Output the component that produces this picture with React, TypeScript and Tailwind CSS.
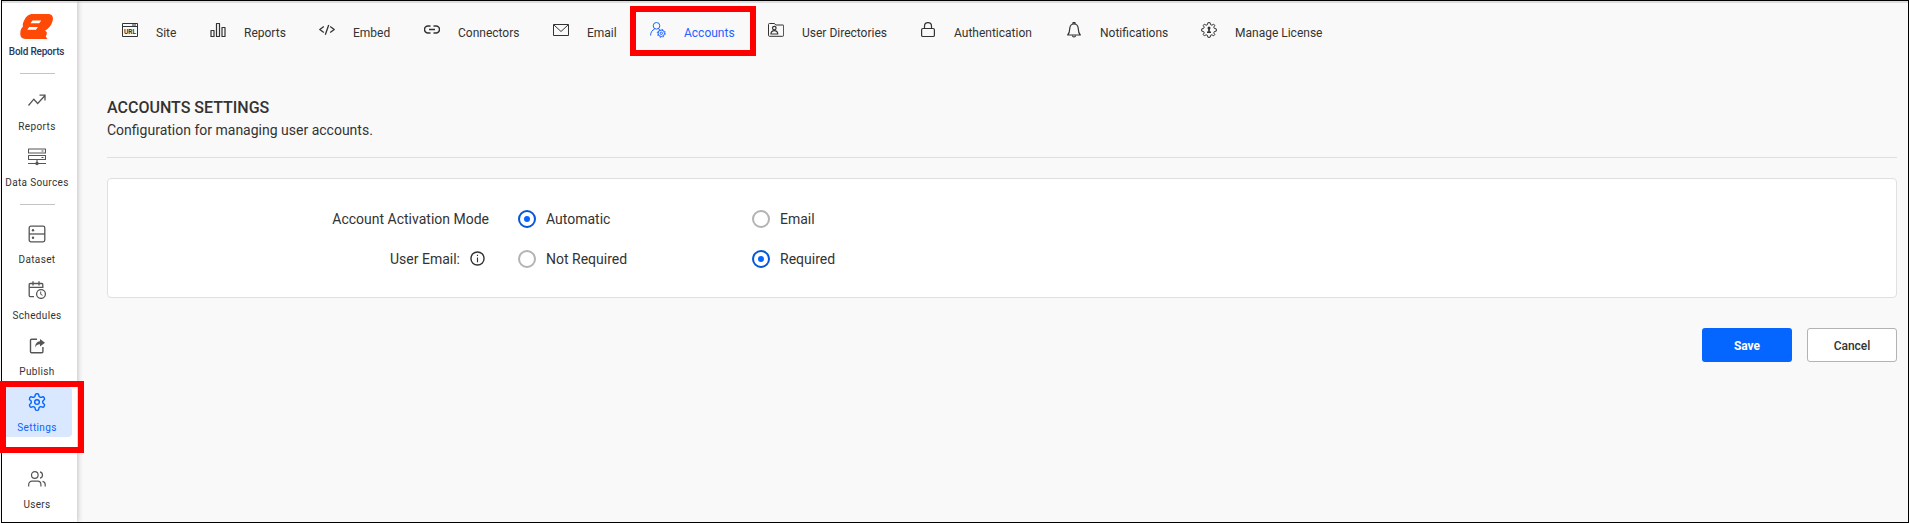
import type { ReactNode } from "react";

const svg = (children: ReactNode, cls = "h-4 w-4", vb = "0 0 16 16") => (
  <svg viewBox={vb} className={cls + " shrink-0"} fill="none" stroke="currentColor" strokeWidth="1" strokeLinejoin="round">
    {children}
  </svg>
);

const gear =
  "M6.900.7H9.100L9.600 2.700 10.900 3.200 12.700 2.200 13.800 3.300 12.800 5.100 13.300 6.400 15.300 6.900V9.100L13.300 9.600 12.800 10.900 13.800 12.700 12.700 13.800 10.900 12.800 9.600 13.300 9.100 15.300H6.900L6.400 13.300 5.100 12.800 3.300 13.800 2.200 12.700 3.200 10.900 2.700 9.600.7 9.100V6.900L2.700 6.400 3.200 5.100 2.200 3.300 3.300 2.200 5.100 3.200 6.400 2.700z";

const tabs = [
  {
    label: "Site",
    width: "w-[54px]",
    icon: svg(
      <>
        <path d="M.5 1.500h15v13H.5zM.5 4.500h15" strokeLinejoin="miter" stroke="#333" />
        <path d="M10 3h4" />
        <text x="8" y="11.900" fontSize="6.500" textAnchor="middle" fill="#333" stroke="none" fontWeight="700" fontFamily="Roboto, sans-serif">URL</text>
      </>
    ),
  },
  {
    label: "Reports",
    width: "w-[75px]",
    icon: svg(<path d="M1 8.500h3v6H1zM6.500 1.500h3v13h-3zM12 5.500h3v9h-3z" strokeWidth="1.200" />),
  },
  {
    label: "Embed",
    width: "w-[71px]",
    icon: svg(<path d="M4.800 4.500.8 7.500l4 3M11.200 4.500l4 3-4 3M9.700 3l-3.400 9.800" strokeWidth="1.300" />),
  },
  {
    label: "Connectors",
    width: "w-[95px]",
    icon: svg(<path d="M6.500 4H4a3.500 3.500 0 0 0 0 7h2.500M9.500 4H12a3.500 3.500 0 0 1 0 7H9.500M5 7.500h6" strokeWidth="1.500" />),
  },
  {
    label: "Email",
    width: "w-[63px]",
    icon: svg(<path d="M.5 2.500h15v11H.5zM.8 2.800 8 9.500l7.200-6.700" />),
  },
  {
    label: "Accounts",
    width: "w-[84px]",
    active: true,
    icon: svg(
      <>
        <circle cx="6.500" cy="3.800" r="3.300" />
        <path d="M.6 13.500c0-3.200 1.600-5.600 4-6.300M8.500 7l1.200.7" />
        <circle cx="11.300" cy="11.300" r="3.200" />
        <circle cx="11.300" cy="11.300" r="4" strokeDasharray="1.500 1.640" />
        <circle cx="11.300" cy="11.300" r="1.200" />
      </>
    ),
  },
  {
    label: "User Directories",
    width: "w-[118px]",
    icon: svg(
      <>
        <path d="M1.500 1.500h5l1.200 1.500H15a.7.7 0 0 1 .7.7v9.600a1 1 0 0 1-1 1H1.500a1 1 0 0 1-1-1V2.500a1 1 0 0 1 1-1z" />
        <circle cx="6.300" cy="6.100" r="1.800" strokeWidth="1.200" />
        <path d="M2.900 12c.2-2.200 1.500-3.300 3.400-3.300S9.600 9.800 9.800 12z" strokeWidth="1.200" />
      </>
    ),
  },
  {
    label: "Authentication",
    width: "w-[112px]",
    icon: svg(
      <>
        <rect x="1.600" y="6.500" width="12.800" height="8" rx="1.300" strokeWidth="1.200" />
        <path d="M4.500 6.500V4.200a3.500 3.500 0 0 1 7 0v2.300" strokeWidth="1.200" />
      </>
    ),
  },
  {
    label: "Notifications",
    width: "w-[101px]",
    icon: svg(
      <>
        <path d="M1.700 13h12.600c-1.500-1.600-1.900-2.800-2-6C12.200 4 10.500 2 8 2S3.800 4 3.700 7c-.1 3.200-.5 4.400-2 6z" strokeWidth="1.200" />
        <path d="M6.500 13.500a1.500 1.500 0 0 0 3 0M7 2V.7h2V2" strokeWidth="1.200" />
      </>
    ),
  },
  {
    label: "Manage License",
    width: "w-[122px]",
    icon: svg(
      <>
        <path d={gear} strokeWidth="1" />
        <circle cx="8" cy="5.900" r="1.500" fill="currentColor" stroke="none" />
        <path d="M7.200 6h1.600v3.500H10V11H6V9.500h1.200z" fill="currentColor" stroke="none" />
      </>
    ),
  },
];

const sideSvg = (children: ReactNode) => svg(children, "h-[18px] w-[18px]", "0 0 18 18");

const icons = {
  reports: sideSvg(<path d="M.5 13.500 5.800 7.200l3.900 4.300L17 3.500M11.500 3.200H17v5.300" strokeWidth="1.300" strokeLinejoin="miter" />),
  sources: sideSvg(
    <>
      <path d="M.5 1h17v4H.5zM.5 7.500h17v4H.5zM9 11.500V15M0 15.500h18" strokeWidth="1.100" />
      <path d="M13.500 3h2M13.500 9.500h2" />
      <circle cx="9" cy="15.500" r="1.700" fill="currentColor" stroke="none" />
    </>
  ),
  dataset: sideSvg(
    <>
      <rect x="1.200" y="1.200" width="15.600" height="15.600" rx="1.700" strokeWidth="1.300" />
      <path d="M1 9h16" strokeWidth="1.300" />
      <circle cx="5" cy="5.200" r="1.200" fill="currentColor" stroke="none" />
      <circle cx="5" cy="12.800" r="1.200" fill="currentColor" stroke="none" />
    </>
  ),
  schedules: sideSvg(
    <>
      <path d="M6 15.600H2.200a1 1 0 0 1-1-1V3.500a1 1 0 0 1 1-1h11.600a1 1 0 0 1 1 1V7M1 6.300h14M5 .3V4.500M11 .3V4.500" strokeWidth="1.300" />
      <circle cx="13" cy="13" r="4.400" strokeWidth="1.300" />
      <path d="M12.700 10.500V13.300l1.800 1" />
    </>
  ),
  publish: sideSvg(
    <>
      <path d="M9 2.200H3.500a1 1 0 0 0-1 1v11.600a1 1 0 0 0 1 1h10.400a1 1 0 0 0 1-1V10" strokeWidth="1.400" />
      <path d="M12 2l5 3.800-5 3.800V7.300c-2.500 0-3.800.7-4.800 3.300.1-3.600 1.500-6 4.800-6.300z" fill="currentColor" stroke="none" />
    </>
  ),
  settings: svg(
    <>
      <path
        d="M12.220 2h-.44a2 2 0 0 0-2 2v.18a2 2 0 0 1-1 1.730l-.43.25a2 2 0 0 1-2 0l-.15-.08a2 2 0 0 0-2.730.73l-.22.38a2 2 0 0 0 .73 2.730l.15.1a2 2 0 0 1 1 1.720v.51a2 2 0 0 1-1 1.740l-.15.09a2 2 0 0 0-.73 2.730l.22.38a2 2 0 0 0 2.730.73l.15-.08a2 2 0 0 1 2 0l.43.25a2 2 0 0 1 1 1.730V20a2 2 0 0 0 2 2h.44a2 2 0 0 0 2-2v-.18a2 2 0 0 1 1-1.730l.43-.25a2 2 0 0 1 2 0l.15.08a2 2 0 0 0 2.730-.73l.22-.39a2 2 0 0 0-.73-2.730l-.15-.08a2 2 0 0 1-1-1.740v-.5a2 2 0 0 1 1-1.740l.15-.09a2 2 0 0 0 .73-2.730l-.22-.38a2 2 0 0 0-2.730-.73l-.15.08a2 2 0 0 1-2 0l-.43-.25a2 2 0 0 1-1-1.730V4a2 2 0 0 0-2-2z"
        strokeWidth="1.700"
      />
      <circle cx="12" cy="12" r="2.800" strokeWidth="1.700" />
    </>,
    "h-5 w-5",
    "0 0 24 24"
  ),
  users: sideSvg(
    <>
      <circle cx="6.800" cy="5" r="3.300" strokeWidth="1.200" />
      <path d="M.7 16.500v-2a3.300 3.300 0 0 1 3.300-3.300h5.600a3.300 3.300 0 0 1 3.300 3.300v2M12 1.800a3.300 3.300 0 0 1 0 6.400M14.500 11.300a3.300 3.300 0 0 1 2.700 3.200v2" strokeWidth="1.200" />
    </>
  ),
};

function SideItem({ icon, label, active }: { icon: ReactNode; label: string; active?: boolean }) {
  return (
    <div
      className={
        "flex h-[50px] w-[70px] shrink-0 flex-col items-center rounded-r-[4px] " +
        (active ? "bg-[#d9e8ff] text-[#0565ff]" : "text-[#555]")
      }
    >
      <span className="mt-[5px] flex h-5 items-center justify-center">{icon}</span>
      <span className={"mt-[9px] whitespace-nowrap text-[10px] leading-[14px] tracking-[0.35px] " + (active ? "" : "text-[#333]")}>{label}</span>
    </div>
  );
}

function Radio({ label, checked }: { label: string; checked?: boolean }) {
  return (
    <div className="flex w-[234px] items-center gap-[10px]">
      <span
        className={
          "flex h-[18px] w-[18px] items-center justify-center rounded-full border-2 " +
          (checked ? "border-[#0557d8]" : "border-[#b3b3b3]")
        }
      >
        {checked && <span className="h-[6px] w-[6px] rounded-full bg-[#0565ff]" />}
      </span>
      <span>{label}</span>
    </div>
  );
}

export default function App() {
  return (
    <div className="relative h-[523px] w-[1909px] overflow-hidden bg-white pl-px font-['Roboto',sans-serif] text-[#333]">
      <div className="flex h-[523px] w-[1908px] border border-black bg-[#f9f9f9]">
        <aside className="z-10 flex w-[75px] shrink-0 flex-col border-t-2 border-[#ddd] bg-white shadow-[1px_0_5px_rgba(0,0,0,0.22)]">
          <div className="flex h-[59px] w-[69px] flex-col items-center pt-[11px]">
            <svg viewBox="0 0 33 25" className="h-[25px] w-[33px]">
              <path d="M13 0H27.500C32.500 0 33.500 3 32.700 6.500 31.500 11.500 28.500 14.500 25 16.800 27.500 18 27.300 20 25.700 22.300L27.300 25H5.500C1.500 25 0 22.500.3 19 .5 16.500 1 14.500 3 12.600 2.500 11 2.800 9.300 4 6.800 6 2.300 8.500 0 13 0z" fill="#ff4a07" />
              <path d="M12.500 6.500h8.700l-2 2.800h-8.700zM9.200 13h8.700l-2 2.800H7.200z" fill="white" />
            </svg>
            <span className="mt-[7px] whitespace-nowrap text-[10px] font-medium leading-3 tracking-[-0.2px] text-[#27385f]">Bold Reports</span>
          </div>
          <div className="ml-[18px] mt-[11px] h-px w-[35px] shrink-0 bg-[#c4c4c4]" />
          <nav className="mt-3 flex flex-col gap-[6px]">
            <SideItem icon={icons.reports} label="Reports" />
            <SideItem icon={icons.sources} label="Data Sources" />
          </nav>
          <div className="ml-[18px] mt-3 h-px w-[35px] shrink-0 bg-[#c4c4c4]" />
          <nav className="mt-[14px] flex flex-col gap-[6px]">
            <SideItem icon={icons.dataset} label="Dataset" />
            <SideItem icon={icons.schedules} label="Schedules" />
            <SideItem icon={icons.publish} label="Publish" />
            <SideItem icon={icons.settings} label="Settings" active />
          </nav>
          <div className="mt-[27px]">
            <SideItem icon={icons.users} label="Users" />
          </div>
        </aside>
        <main className="flex min-w-0 flex-1 flex-col border-t-2 border-[#ddd] pl-[30px] pr-[11px]">
          <nav className="flex h-[60px] pl-[15px] pt-[19px]">
            {tabs.map((t) => (
              <div key={t.label} className={"mr-[34px] flex h-5 shrink-0 gap-[18px] " + t.width + (t.active ? " text-[#1f62ff]" : "")}>
                {t.icon}
                <span className="mt-px whitespace-nowrap text-[12px] leading-5">{t.label}</span>
              </div>
            ))}
          </nav>
          <header className="flex h-[95px] flex-col border-b border-[#e0e0e0] pt-[34px]">
            <h1 className="text-[16px] font-medium leading-[22px]">ACCOUNTS SETTINGS</h1>
            <p className="text-[14px] leading-[22px]">Configuration for managing user accounts.</p>
          </header>
          <section className="mt-5 flex h-[120px] flex-col rounded-[4px] border border-[#e0e0e0] bg-white pt-5 text-[14px]">
            <div className="flex h-10 items-center">
              <span className="mr-[29px] w-[381px] text-right">Account Activation Mode</span>
              <Radio label="Automatic" checked />
              <Radio label="Email" />
            </div>
            <div className="flex h-10 items-center">
              <div className="mr-[33px] flex w-[377px] items-center justify-end gap-[10px]">
                <span>User Email:</span>
                {svg(
                  <>
                    <circle cx="8" cy="8" r="7" strokeWidth="1.500" />
                    <path d="M8 6.800V12M8 4v1.400" strokeWidth="1.200" />
                  </>,
                  "h-[15px] w-[15px] -mt-[2px]"
                )}
              </div>
              <Radio label="Not Required" />
              <Radio label="Required" checked />
            </div>
          </section>
          <div className="mt-[30px] flex justify-end gap-[15px] text-[12px]">
            <button className="h-[34px] w-[90px] rounded-[3px] bg-[#0565ff] pt-[2px] font-bold text-white">Save</button>
            <button className="h-[34px] w-[90px] rounded-[3px] border border-[#b3b3b3] bg-white pt-[2px] font-medium">Cancel</button>
          </div>
        </main>
      </div>
      <div className="absolute left-0 top-[381px] z-20 h-[72px] w-[84px] border-[6px] border-[#f00]" />
      <div className="absolute left-[630px] top-[6px] z-20 h-[50px] w-[126px] border-[6px] border-[#f00]" />
    </div>
  );
}
